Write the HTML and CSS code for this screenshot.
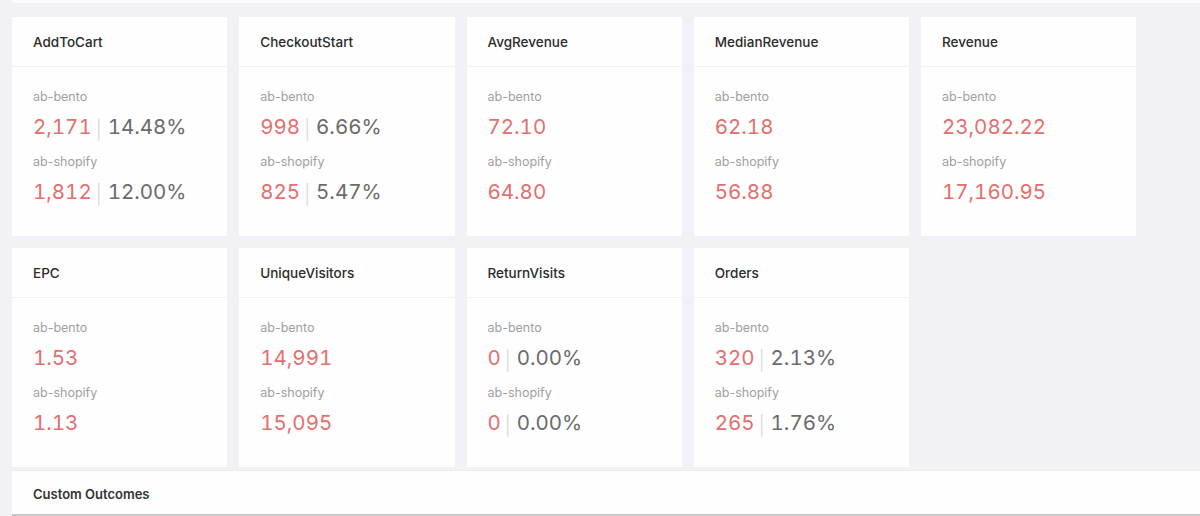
FILE: index.html
```html
<!DOCTYPE html>
<html>
<head>
<meta charset="utf-8">
<link rel="stylesheet" href="styles.css">
</head>
<body>
<div class="page">
  <div class="topstrip"></div>
  <div class="grid">
    <div class="card">
      <div class="card-head">AddToCart</div>
      <div class="card-body">
        <div class="label">ab-bento</div>
        <div class="value"><span class="num">2,171</span><span class="sep">|</span><span class="pct">14.48%</span></div>
        <div class="label second">ab-shopify</div>
        <div class="value"><span class="num">1,812</span><span class="sep">|</span><span class="pct">12.00%</span></div>
      </div>
    </div>
    <div class="card">
      <div class="card-head">CheckoutStart</div>
      <div class="card-body">
        <div class="label">ab-bento</div>
        <div class="value"><span class="num">998</span><span class="sep">|</span><span class="pct">6.66%</span></div>
        <div class="label second">ab-shopify</div>
        <div class="value"><span class="num">825</span><span class="sep">|</span><span class="pct">5.47%</span></div>
      </div>
    </div>
    <div class="card">
      <div class="card-head">AvgRevenue</div>
      <div class="card-body">
        <div class="label">ab-bento</div>
        <div class="value"><span class="num">72.10</span></div>
        <div class="label second">ab-shopify</div>
        <div class="value"><span class="num">64.80</span></div>
      </div>
    </div>
    <div class="card">
      <div class="card-head">MedianRevenue</div>
      <div class="card-body">
        <div class="label">ab-bento</div>
        <div class="value"><span class="num">62.18</span></div>
        <div class="label second">ab-shopify</div>
        <div class="value"><span class="num">56.88</span></div>
      </div>
    </div>
    <div class="card">
      <div class="card-head">Revenue</div>
      <div class="card-body">
        <div class="label">ab-bento</div>
        <div class="value"><span class="num">23,082.22</span></div>
        <div class="label second">ab-shopify</div>
        <div class="value"><span class="num">17,160.95</span></div>
      </div>
    </div>
    <div class="card">
      <div class="card-head">EPC</div>
      <div class="card-body">
        <div class="label">ab-bento</div>
        <div class="value"><span class="num">1.53</span></div>
        <div class="label second">ab-shopify</div>
        <div class="value"><span class="num">1.13</span></div>
      </div>
    </div>
    <div class="card">
      <div class="card-head">UniqueVisitors</div>
      <div class="card-body">
        <div class="label">ab-bento</div>
        <div class="value"><span class="num">14,991</span></div>
        <div class="label second">ab-shopify</div>
        <div class="value"><span class="num">15,095</span></div>
      </div>
    </div>
    <div class="card">
      <div class="card-head">ReturnVisits</div>
      <div class="card-body">
        <div class="label">ab-bento</div>
        <div class="value"><span class="num">0</span><span class="sep">|</span><span class="pct">0.00%</span></div>
        <div class="label second">ab-shopify</div>
        <div class="value"><span class="num">0</span><span class="sep">|</span><span class="pct">0.00%</span></div>
      </div>
    </div>
    <div class="card">
      <div class="card-head">Orders</div>
      <div class="card-body">
        <div class="label">ab-bento</div>
        <div class="value"><span class="num">320</span><span class="sep">|</span><span class="pct">2.13%</span></div>
        <div class="label second">ab-shopify</div>
        <div class="value"><span class="num">265</span><span class="sep">|</span><span class="pct">1.76%</span></div>
      </div>
    </div>
  </div>
  <div class="section">Custom Outcomes</div>
</div>
</body>
</html>
```
FILE: styles.css
```css
html, body {
  margin: 0;
  padding: 0;
  background: #f1f1f6;
  font-family: Inter, "Noto Sans", sans-serif;
  overflow: hidden;
}
.page {
  height: 516px;
  padding-left: 12px;
  box-sizing: border-box;
  display: flex;
  flex-direction: column;
}
.topstrip {
  height: 3px;
  background: #fbfbfd;
}
.grid {
  margin-top: 14px;
  display: grid;
  grid-template-columns: repeat(5, 215.25px);
  column-gap: 12px;
  row-gap: 12px;
}
.card {
  background: #fefefe;
  height: 219px;
  display: flex;
  flex-direction: column;
}
.card-head {
  height: 50px;
  box-sizing: border-box;
  border-bottom: 1px solid #f2f2f4;
  padding-left: 21px;
  display: flex;
  align-items: center;
  font-size: 13.5px;
  font-weight: 500;
  color: #2b2b2b;
}
.card-body {
  padding: 21px 21px 0;
}
.label {
  font-size: 12.5px;
  line-height: 18px;
  color: #a0a0a0;
}
.label.second {
  margin-top: 12px;
}
.value {
  margin-top: 7px;
  font-size: 20.5px;
  line-height: 28px;
  height: 28px;
  white-space: nowrap;
  font-feature-settings: "tnum";
}
.num {
  color: #e46f6f;
}
.sep {
  color: #d8d8d8;
  font-size: 19px;
  font-weight: 300;
  margin: 0 6px 0 4px;
  vertical-align: -2px;
}
.pct {
  color: #6b6b6b;
}
.section {
  margin-top: 3px;
  border-top: 1px solid #ececf0;
  background: #fefefe;
  height: 46px;
  box-sizing: border-box;
  border-bottom: 2px solid #c8c8c8;
  padding-left: 21px;
  padding-top: 3px;
  display: flex;
  align-items: center;
  font-size: 13px;
  font-weight: 600;
  color: #333;
}
```
